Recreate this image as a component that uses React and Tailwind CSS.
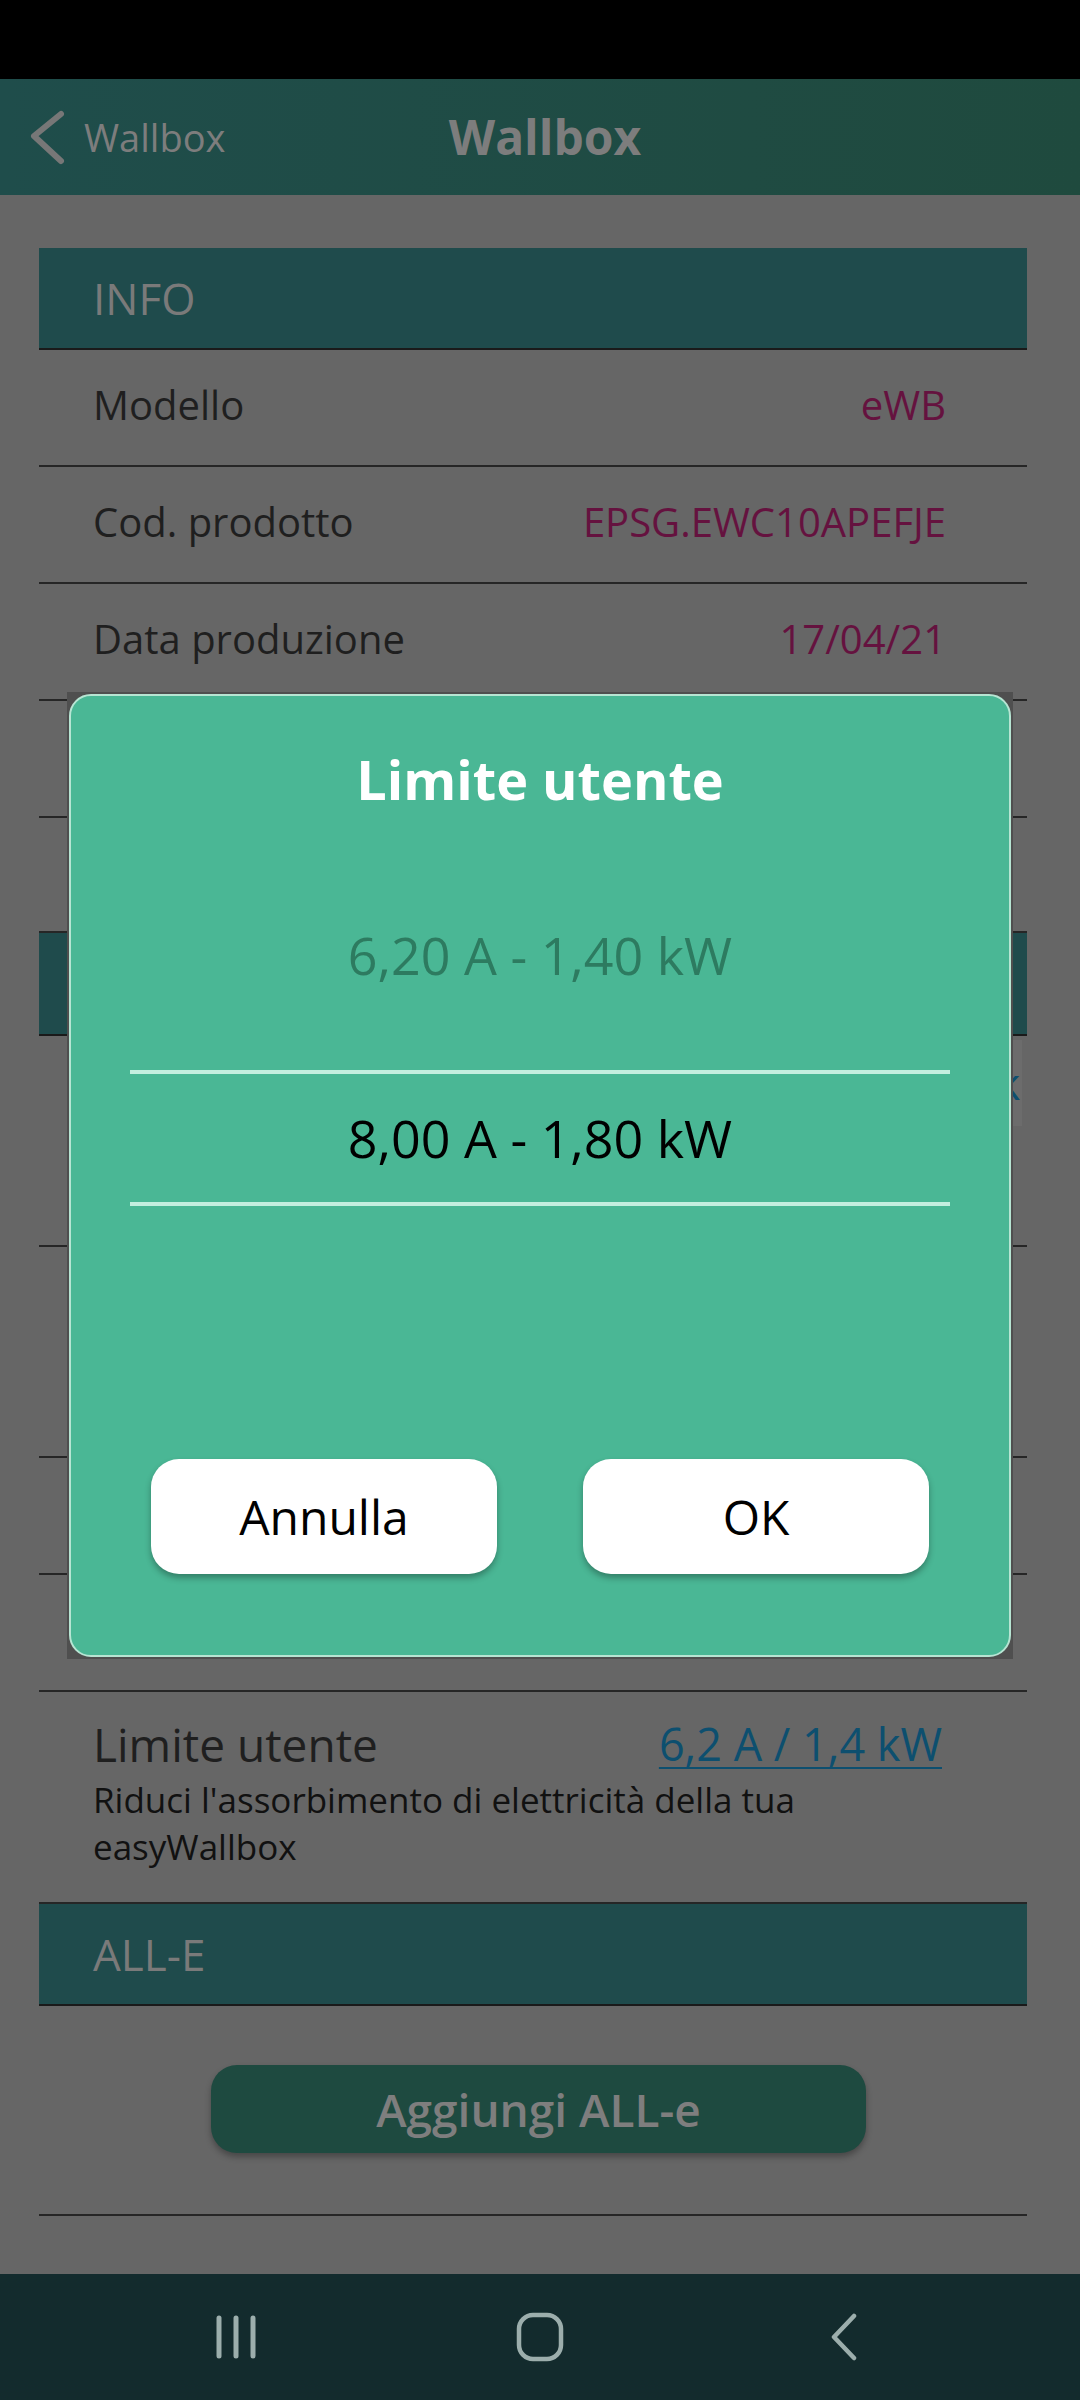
import React from 'react'

const Row = ({ label, value, h = 'h-[117px]' }) => (
    <div className={`flex ${h} items-center justify-between border-b-2 border-[#262626] pb-[6px] pl-[54px] pr-[81px]`}>
        <span className="text-[40px] text-[#1f1f1f]">{label}</span>
        <span className="text-[40px] text-[#65123f]">{value}</span>
    </div>
)

const SectionHeader = ({ title, className = '' }) => (
    <div className={`flex h-[102px] items-center border-b-2 border-[#1a1a1a] bg-[#1f4b4c] pl-[54px] text-[44px] text-[#7a7a7a] ${className}`}>
        {title}
    </div>
)

const NavBar = () => (
    <div className="grid h-[126px] grid-cols-3 items-center bg-[#132b2d] px-[84px]">
        <div className="flex justify-center">
            <svg width="44" height="46" viewBox="0 0 44 46" fill="none" stroke="#9caeac" strokeWidth="5" strokeLinecap="round">
                <line x1="5" y1="4" x2="5" y2="42" />
                <line x1="22" y1="4" x2="22" y2="42" />
                <line x1="39" y1="4" x2="39" y2="42" />
            </svg>
        </div>
        <div className="flex justify-center">
            <svg width="48" height="50" viewBox="0 0 48 50" fill="none" stroke="#9caeac" strokeWidth="4.5">
                <rect x="3" y="3" width="42" height="44" rx="14" />
            </svg>
        </div>
        <div className="flex justify-center">
            <svg width="30" height="48" viewBox="0 0 30 48" fill="none" stroke="#9caeac" strokeWidth="4.5" strokeLinecap="round" strokeLinejoin="round">
                <polyline points="25,3 5,24 25,45" />
            </svg>
        </div>
    </div>
)

// wheel picker modal for the user current limit
const LimitDialog = () => (
    <div className="absolute left-[67px] top-[692px] h-[967px] w-[946px] bg-[#4f4f4f]">
        <div className="m-[2px] flex h-[963px] flex-col rounded-[22px] border-2 border-[#b7e5d3] bg-[#4ab795] px-[80px]">
            <h2 className="mt-[47px] self-center text-[54px] font-bold leading-[72px] text-white">Limite utente</h2>
            <div className="mt-[104px] self-center text-[52px] leading-[72px] text-[#2d7b60]">6,20 A - 1,40 kW</div>
            <div className="mx-[-21px] mt-[79px] h-[4px] bg-[#c4eedf]" />
            <div className="mt-[28px] self-center text-[52px] leading-[72px] text-black">8,00 A - 1,80 kW</div>
            <div className="mx-[-21px] mt-[28px] h-[4px] bg-[#c4eedf]" />
            <div className="mt-[253px] grid grid-cols-2 gap-[86px]">
                <button className="h-[115px] rounded-[28px] bg-white text-[48px] text-black shadow-[0_4px_6px_rgba(0,0,0,0.3)]">Annulla</button>
                <button className="h-[115px] rounded-[28px] bg-white text-[48px] text-black shadow-[0_4px_6px_rgba(0,0,0,0.3)]">OK</button>
            </div>
        </div>
    </div>
)

const App = () => {
    return (
        <div className="relative flex h-[2400px] w-[1080px] flex-col overflow-hidden bg-[#666666] font-['Open_Sans',sans-serif]">
            <div className="h-[79px] bg-black" />

            <div className="grid h-[116px] grid-cols-[1fr_auto_1fr] items-center bg-gradient-to-r from-[#1f4d4b] to-[#1f4a3e]">
                <div className="flex items-center pl-[30px]">
                    <svg width="36" height="56" viewBox="0 0 36 56" fill="none" stroke="#777777" strokeWidth="6" strokeLinecap="round" strokeLinejoin="round">
                        <polyline points="31,5 4,27 31,52" />
                    </svg>
                    <span className="ml-[18px] text-[38px] text-[#7d7d7d]">Wallbox</span>
                </div>
                <div className="pl-[10px] text-[48px] font-bold text-[#7d7d7d]">Wallbox</div>
                <div />
            </div>

            <div className="flex-1 pl-[39px] pr-[53px] pt-[53px]">
                <SectionHeader title="INFO" />
                <Row label="Modello" value="eWB" />
                <Row label="Cod. prodotto" value="EPSG.EWC10APEFJE" />
                <Row label="Data produzione" value="17/04/21" />
                <Row />
                <Row h="h-[115px]" />

                <SectionHeader className="h-[103px]" />
                <div className="flex h-[211px] items-start justify-end border-b-2 border-[#262626] pr-[5px] pt-[4px]">
                    <span className="flex h-[86px] items-center bg-[#6c6c6c] pl-[6px] pr-[2px] text-[44px] text-[#0d4f6f]">k</span>
                </div>
                <Row h="h-[211px]" />
                <Row />
                <Row />

                <div className="h-[212px] border-b-2 border-[#262626] pl-[54px] pr-[85px] pt-[24px]">
                    <div className="flex items-center justify-between">
                        <span className="text-[46px] leading-[56px] text-[#1f1f1f]">Limite utente</span>
                        <span className="text-[45px] leading-[56px] text-[#0d4f6f] underline decoration-2 underline-offset-[6px]">6,2 A / 1,4 kW</span>
                    </div>
                    <p className="mt-[4px] w-[760px] text-[35px] leading-[47px] text-[#111111]">
                        Riduci l'assorbimento di elettricità della tua easyWallbox
                    </p>
                </div>

                <SectionHeader title="ALL-E" className="h-[101px]" />
                <div className="flex justify-center border-b-2 border-[#262626] pb-[61px] pl-[11px] pt-[59px]">
                    <button className="h-[88px] w-[655px] rounded-[26px] bg-[#1e4a40] text-[46px] font-semibold text-[#7e7e7e] shadow-[0_4px_6px_rgba(0,0,0,0.3)]">
                        Aggiungi ALL-e
                    </button>
                </div>
            </div>

            <NavBar />
            <LimitDialog />
        </div>
    )
}

export default App
